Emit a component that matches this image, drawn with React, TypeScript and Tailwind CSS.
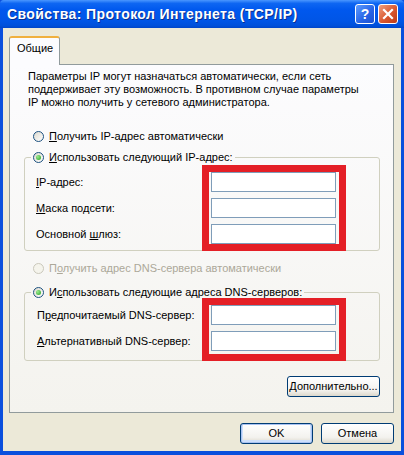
import React from "react";

const font = { fontFamily: '"Liberation Sans", Arial, sans-serif' };

type RadioProps = { checked?: boolean; disabled?: boolean };

const Radio = ({ checked, disabled }: RadioProps) => (
  <span
    className={`flex items-center justify-center w-[11px] h-[11px] rounded-full border shrink-0 ${
      disabled
        ? "border-[#CAC8BB] bg-[#F5F4EC]"
        : "border-[#1C5180] bg-[linear-gradient(135deg,#DCD9CE,#FFFFFF)]"
    }`}
  >
    {checked && (
      <span className="w-[5px] h-[5px] rounded-full bg-[radial-gradient(circle_at_35%_35%,#9CEB8F,#21A121)]" />
    )}
  </span>
);

// label with one underlined access-key letter
const Key = ({ pre = "", k, post }: { pre?: string; k: string; post: string }) => (
  <span>
    {pre}
    <span className="underline underline-offset-[1px]">{k}</span>
    {post}
  </span>
);

const Field = () => (
  <div className="w-[125px] h-[20px] border border-[#7F9DB9] bg-white" />
);

const XpButton = ({
  children,
  width,
  primary,
}: {
  children: React.ReactNode;
  width: string;
  primary?: boolean;
}) => (
  <button
    className={`${width} h-[21px] rounded-[3px] border border-[#003C74] bg-[linear-gradient(to_bottom,#FFFFFF,#F3F2EE_70%,#DCD8CC)] text-[11px] text-black leading-none ${
      primary ? "shadow-[inset_0_0_0_1px_#A9C3F2,inset_0_-1px_0_2px_#CEE0FB]" : ""
    }`}
  >
    {children}
  </button>
);

export default function App() {
  return (
    <div
      className="w-[404px] h-[455px] flex flex-col bg-[#0A4FDD] text-black text-[11px]"
      style={font}
    >
      {/* title bar */}
      <div className="h-[28px] shrink-0 flex items-center pl-[7px] pr-[6px] bg-[linear-gradient(to_bottom,#4A97FF_0%,#0E66F2_12%,#0058EE_35%,#0055E6_75%,#0050DA_92%,#0045C9_100%)] rounded-t-[4px]">
        <span className="flex-1 text-white font-bold text-[14px] [text-shadow:1px_1px_0_#0A2F8F] tracking-[0.4px]">
          Свойства: Протокол Интернета (TCP/IP)
        </span>
        <div className="flex gap-[3px]">
          <div className="w-[20px] h-[20px] rounded-[3px] border border-white bg-[linear-gradient(135deg,#5E9CFF,#2662E5_60%,#1E52D0)] flex items-center justify-center text-white font-bold text-[14px] leading-none">
            ?
          </div>
          <div className="w-[20px] h-[20px] rounded-[3px] border border-white bg-[linear-gradient(135deg,#F0A080,#D9572F_55%,#BD3A17)] flex items-center justify-center">
            <svg width="12" height="12" viewBox="0 0 12 12">
              <path d="M2 2 L10 10 M10 2 L2 10" stroke="white" strokeWidth="2.2" strokeLinecap="square" />
            </svg>
          </div>
        </div>
      </div>

      {/* body */}
      <div className="flex-1 mx-[3px] mb-[4px] bg-[#ECE9D8] flex flex-col pl-[6px] pr-[7px] pt-[8px]">
        {/* tab */}
        <div className="flex">
          <div className="w-[51px] h-[29px] -mb-[1px] relative z-10 border-x border-[#919B9C] border-t-[2px] border-t-[#F0B03E] rounded-t-[3px] bg-[#FCFCFE] pt-[4px] pl-[7px] leading-[13px]">
            Общие
          </div>
        </div>

        {/* panel */}
        <div className="h-[349px] border border-[#919B9C] bg-[linear-gradient(to_bottom,#FCFCFE,#F4F3EE)] pt-[5px] pl-[14px] pr-[13px] flex flex-col">
          <p className="pl-[4px] leading-[13px]">
            Параметры IP могут назначаться автоматически, если сеть
            <br />
            поддерживает эту возможность. В противном случае параметры
            <br />
            IP можно получить у сетевого администратора.
          </p>

          <div className="mt-[21px] pl-[9px] h-[13px] flex items-center gap-[5px]">
            <Radio />
            <Key k="П" post="олучить IP-адрес автоматически" />
          </div>

          <fieldset className="mt-[8px] border border-[#D0D0BF] rounded-[3px]">
            <legend className="ml-[6px] px-[2px] h-[13px] flex items-center gap-[5px]">
              <Radio checked />
              <Key k="И" post="спользовать следующий IP-адрес:" />
            </legend>
            <div className="flex pl-[11px] mt-[1px]">
              <div className="w-[166px] pt-[7px] flex flex-col gap-[6px]">
                <div className="h-[20px] flex items-center">
                  <Key k="I" post="P-адрес:" />
                </div>
                <div className="h-[20px] flex items-center">
                  <Key k="М" post="аска подсети:" />
                </div>
                <div className="h-[20px] flex items-center">
                  <Key pre="Основной " k="ш" post="люз:" />
                </div>
              </div>
              <div className="border-[7px] border-[#E41F26] pl-[2px] pr-[3px] flex flex-col gap-[6px] -mb-[1px]">
                <Field />
                <Field />
                <Field />
              </div>
            </div>
          </fieldset>

          <div className="mt-[11px] pl-[9px] h-[13px] flex items-center gap-[5px] text-[#ACA899]">
            <Radio disabled />
            <Key pre="П" k="о" post="лучить адрес DNS-сервера автоматически" />
          </div>

          <fieldset className="mt-[11px] border border-[#D0D0BF] rounded-[3px]">
            <legend className="ml-[6px] px-[2px] h-[13px] flex items-center gap-[5px]">
              <Radio checked />
              <Key pre="И" k="с" post="пользовать следующие адреса DNS-серверов:" />
            </legend>
            <div className="flex pl-[12px] -mt-[1px]">
              <div className="w-[165px] pt-[7px] flex flex-col gap-[6px]">
                <div className="h-[20px] flex items-center">
                  <Key pre="П" k="р" post="едпочитаемый DNS-сервер:" />
                </div>
                <div className="h-[20px] flex items-center">
                  <Key k="А" post="льтернативный DNS-сервер:" />
                </div>
              </div>
              <div className="border-[7px] border-[#E41F26] pl-[2px] pr-[3px] pb-[3px] flex flex-col gap-[6px] -mb-[1px]">
                <Field />
                <Field />
              </div>
            </div>
          </fieldset>

          <div className="mt-[15px] flex justify-end">
            <XpButton width="w-[93px]">
              <Key k="Д" post="ополнительно..." />
            </XpButton>
          </div>
        </div>

        {/* dialog buttons */}
        <div className="mt-[10px] flex justify-end gap-[8px]">
          <XpButton width="w-[73px]" primary>
            OK
          </XpButton>
          <XpButton width="w-[73px]">Отмена</XpButton>
        </div>
      </div>
    </div>
  );
}
